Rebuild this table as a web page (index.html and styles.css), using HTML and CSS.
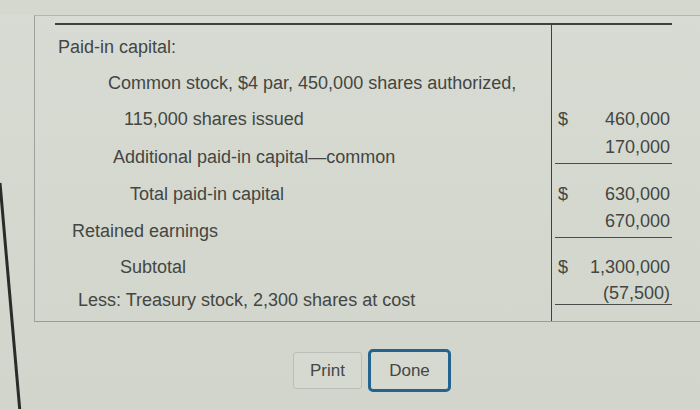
FILE: index.html
```html
<!DOCTYPE html>
<html lang="en">
<head>
<meta charset="utf-8">
<title>Stockholders' equity</title>
<link rel="stylesheet" href="styles.css">
</head>
<body>
<div class="screen">
  <div class="panel">
    <div class="sheet">
      <div class="row r1"><div class="label">Paid-in capital:</div><div class="amt"></div></div>
      <div class="row r2"><div class="label">Common stock, $4 par, 450,000 shares authorized,</div><div class="amt"></div></div>
      <div class="row r3"><div class="label">115,000 shares issued</div><div class="amt"><div class="val"><span>$</span><span>460,000</span></div></div></div>
      <div class="row r4"><div class="label">Additional paid-in capital—common</div><div class="amt"><div class="val ul"><span></span><span>170,000</span></div></div></div>
      <div class="row r5"><div class="label">Total paid-in capital</div><div class="amt"><div class="val"><span>$</span><span>630,000</span></div></div></div>
      <div class="row r6"><div class="label">Retained earnings</div><div class="amt"><div class="val ul"><span></span><span>670,000</span></div></div></div>
      <div class="row r7"><div class="label">Subtotal</div><div class="amt"><div class="val"><span>$</span><span>1,300,000</span></div></div></div>
      <div class="row r8"><div class="label">Less: Treasury stock, 2,300 shares at cost</div><div class="amt"><div class="val ul tight"><span></span><span>(57,500)</span></div></div></div>
    </div>
  </div>
  <div class="actions">
    <button class="btn">Print</button>
    <button class="btn primary">Done</button>
  </div>
  <svg class="edge" width="30" height="409" viewBox="0 0 30 409"><line x1="0" y1="168" x2="21" y2="409" stroke="#2a2c2a" stroke-width="3"/></svg>
</div>
</body>
</html>
```
FILE: styles.css
```css
*, *::before, *::after {
  box-sizing: border-box;
}
html, body {
  margin: 0;
  padding: 0;
}
body {
  background: #d5d8cf;
  font-family: "Liberation Sans", Arial, sans-serif;
  color: #434643;
  width: 700px;
  height: 409px;
  overflow: hidden;
}
.screen {
  position: relative;
  width: 700px;
  height: 409px;
  background: linear-gradient(180deg, #d8dbd3 0%, #d4d7cd 60%, #d2d5cb 100%);
}
.panel {
  margin-left: 34px;
  margin-top: 15px;
  display: flow-root;
  border-top: 1px solid #b3b6ae;
  border-left: 1px solid #9fa29b;
  border-bottom: 1px solid #9a9d96;
}
.sheet {
  margin-left: 20px;
  margin-top: 7px;
  width: 617px;
  border-top: 2px solid #3e403e;
}
.row {
  display: flex;
  font-size: 18px;
  line-height: 20px;
}
.label {
  flex: 0 0 496px;
  display: flex;
  align-items: center;
  white-space: nowrap;
}
.amt {
  flex: 0 0 121px;
  border-left: 1px solid #3f413f;
  display: flex;
  align-items: center;
}
.val {
  flex: 1;
  display: flex;
  justify-content: space-between;
  margin-left: 3px;
  padding-left: 3px;
  padding-right: 2px;
}
.val.ul {
  align-self: flex-start;
  margin-top: -1px;
  padding-bottom: 6px;
  border-bottom: 1px solid #4a4c4a;
}
.val.ul.tight {
  margin-top: 0;
  padding-bottom: 1px;
}
.r1 { height: 40px; }
.r1 .label { padding-top: 4px; padding-left: 3px; }
.r2 { height: 35px; }
.r2 .label { padding-left: 53px; }
.r3 { height: 38px; }
.r3 .label { padding-left: 69px; }
.r4 { height: 38px; }
.r4 .label { padding-left: 58px; }
.r5 { height: 36px; }
.r5 .label { padding-left: 75px; }
.r6 { height: 38px; }
.r6 .label { padding-left: 17px; }
.r7 { height: 33px; }
.r7 .label { padding-left: 65px; }
.r8 { height: 38px; }
.r8 .label { padding-left: 23px; padding-bottom: 4px; }
.r8 .amt { align-items: flex-start; }

.actions {
  display: flex;
  align-items: center;
  gap: 6px;
  margin-left: 293px;
  margin-top: 27px;
}
.btn {
  font-family: "Liberation Sans", Arial, sans-serif;
  font-size: 17px;
  color: #444744;
  background: #d6d9d0;
  border: 1px solid #bcbfb7;
  border-radius: 3px;
  width: 69px;
  height: 37px;
  padding: 0;
}
.btn.primary {
  width: 83px;
  height: 43px;
  border: 3px solid #24638e;
  border-radius: 5px;
}
.edge {
  position: absolute;
  left: 0;
  top: 0;
}
```
